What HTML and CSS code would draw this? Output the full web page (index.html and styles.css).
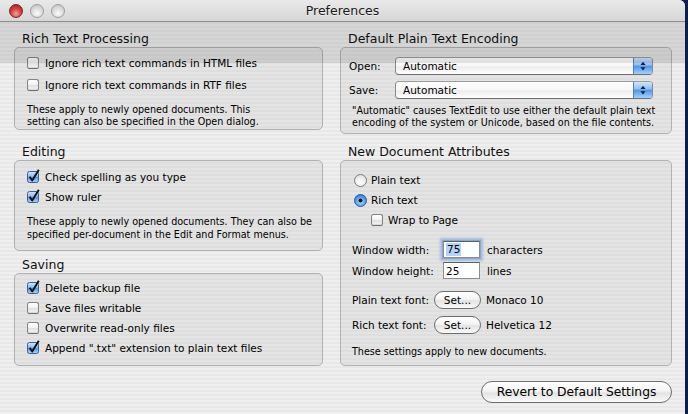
FILE: index.html
```html
<!DOCTYPE html>
<html>
<head>
<meta charset="utf-8">
<title>Preferences</title>
<link rel="stylesheet" href="styles.css">
</head>
<body>
<svg class="defs" width="0" height="0" aria-hidden="true">
  <defs>
    <linearGradient id="aqua" x1="0" y1="0" x2="0" y2="1">
      <stop offset="0" stop-color="#d4e8fb"/>
      <stop offset="0.45" stop-color="#8dbdf0"/>
      <stop offset="0.5" stop-color="#4d93e6"/>
      <stop offset="1" stop-color="#a9dafd"/>
    </linearGradient>
    <radialGradient id="aquaR" cx="0.5" cy="0.6" r="0.6">
      <stop offset="0" stop-color="#b9e3ff"/>
      <stop offset="0.6" stop-color="#5fa3ec"/>
      <stop offset="1" stop-color="#2f6fc4"/>
    </radialGradient>
  </defs>
</svg>
<div class="window">
  <div class="titlebar">
    <div class="lights">
      <span class="light red"></span>
      <span class="light"></span>
      <span class="light"></span>
    </div>
    <div class="title">Preferences</div>
    <div></div>
  </div>
  <div class="content">
    <div class="cols">
      <div class="col left">
        <div class="gh">Rich Text Processing</div>
        <div class="gbox box-rtp">
          <div class="row"><span class="cb"></span><span>Ignore rich text commands in HTML files</span></div>
          <div class="row r2"><span class="cb"></span><span>Ignore rich text commands in RTF files</span></div>
          <div class="note n1">These apply to newly opened documents. This<br>setting can also be specified in the Open dialog.</div>
        </div>

        <div class="gh gh-edit">Editing</div>
        <div class="gbox box-edit">
          <div class="row"><svg class="cbon" viewBox="0 0 12 12" width="12" height="12"><rect x="0.5" y="0.5" width="11" height="11" rx="2" fill="url(#aqua)" stroke="#3d5f93"/><path d="M2.6 5.8 L5.2 9.4 L11.8 -1.2" fill="none" stroke="#0d0d0d" stroke-width="1.9" stroke-linejoin="round"/></svg><span>Check spelling as you type</span></div>
          <div class="row"><svg class="cbon" viewBox="0 0 12 12" width="12" height="12"><rect x="0.5" y="0.5" width="11" height="11" rx="2" fill="url(#aqua)" stroke="#3d5f93"/><path d="M2.6 5.8 L5.2 9.4 L11.8 -1.2" fill="none" stroke="#0d0d0d" stroke-width="1.9" stroke-linejoin="round"/></svg><span>Show ruler</span></div>
          <div class="note n2">These apply to newly opened documents. They can also be<br>specified per-document in the Edit and Format menus.</div>
        </div>

        <div class="gh gh-save">Saving</div>
        <div class="gbox box-save">
          <div class="row"><svg class="cbon" viewBox="0 0 12 12" width="12" height="12"><rect x="0.5" y="0.5" width="11" height="11" rx="2" fill="url(#aqua)" stroke="#3d5f93"/><path d="M2.6 5.8 L5.2 9.4 L11.8 -1.2" fill="none" stroke="#0d0d0d" stroke-width="1.9" stroke-linejoin="round"/></svg><span>Delete backup file</span></div>
          <div class="row"><span class="cb"></span><span>Save files writable</span></div>
          <div class="row"><span class="cb"></span><span>Overwrite read-only files</span></div>
          <div class="row"><svg class="cbon" viewBox="0 0 12 12" width="12" height="12"><rect x="0.5" y="0.5" width="11" height="11" rx="2" fill="url(#aqua)" stroke="#3d5f93"/><path d="M2.6 5.8 L5.2 9.4 L11.8 -1.2" fill="none" stroke="#0d0d0d" stroke-width="1.9" stroke-linejoin="round"/></svg><span>Append ".txt" extension to plain text files</span></div>
        </div>
      </div>

      <div class="col right">
        <div class="gh">Default Plain Text Encoding</div>
        <div class="gbox box-enc">
          <div class="prow"><span class="plabel">Open:</span><div class="popup"><span class="ptext">Automatic</span><span class="pcap"><svg viewBox="0 0 18 16" width="18" height="16"><path d="M6.5 7 L9 3.8 L11.5 7 Z" fill="#0f1e45"/><path d="M6.5 9.2 L9 12.4 L11.5 9.2 Z" fill="#0f1e45"/></svg></span></div></div>
          <div class="prow p2"><span class="plabel">Save:</span><div class="popup"><span class="ptext">Automatic</span><span class="pcap"><svg viewBox="0 0 18 16" width="18" height="16"><path d="M6.5 7 L9 3.8 L11.5 7 Z" fill="#0f1e45"/><path d="M6.5 9.2 L9 12.4 L11.5 9.2 Z" fill="#0f1e45"/></svg></span></div></div>
          <div class="note n3">"Automatic" causes TextEdit to use either the default plain text<br>encoding of the system or Unicode, based on the file contents.</div>
        </div>

        <div class="gh gh-nda">New Document Attributes</div>
        <div class="gbox box-nda">
          <div class="row rr"><span class="radio"></span><span>Plain text</span></div>
          <div class="row rr"><svg class="radioon" viewBox="0 0 13 13" width="13" height="13"><circle cx="6.5" cy="6.5" r="6" fill="url(#aquaR)" stroke="#34609c"/><circle cx="6.5" cy="6.5" r="2" fill="#121a33"/></svg><span>Rich text</span></div>
          <div class="row rw"><span class="cb"></span><span>Wrap to Page</span></div>
          <div class="frow f1"><span class="flabel">Window width:</span><span class="field focus"><span class="sel">75</span></span><span>characters</span></div>
          <div class="frow f2"><span class="flabel">Window height:</span><span class="field">25</span><span>lines</span></div>
          <div class="brow b1"><span class="blabel">Plain text font:</span><span class="btn">Set...</span><span>Monaco 10</span></div>
          <div class="brow b2"><span class="blabel">Rich text font:</span><span class="btn">Set...</span><span>Helvetica 12</span></div>
          <div class="note n4">These settings apply to new documents.</div>
        </div>
      </div>
    </div>
    <div class="footer"><span class="btn big">Revert to Default Settings</span></div>
  </div>
  <div class="band"></div>
</div>
</body>
</html>
```
FILE: styles.css
```css
html, body {
  margin: 0;
  padding: 0;
}
body {
  width: 688px;
  height: 414px;
  overflow: hidden;
  background: #0f1d4c;
  font-family: "DejaVu Sans", "Liberation Sans", sans-serif;
  color: #000;
}
.defs {
  position: absolute;
  width: 0;
  height: 0;
}
.window {
  position: relative;
  width: 685px;
  height: 414px;
  border-top-right-radius: 6px;
  overflow: hidden;
  background: repeating-linear-gradient(180deg, #efefef 0px, #efefef 2px, #e8e8e8 2px, #e8e8e8 4px);
}
.titlebar {
  height: 21px;
  border-bottom: 1px solid #8d8d8d;
  background: linear-gradient(180deg, #e9e9e9 0%, #d6d6d6 100%);
  display: grid;
  grid-template-columns: 1fr auto 1fr;
  align-items: center;
}
.lights {
  display: flex;
  gap: 7px;
  padding-left: 9px;
}
.light {
  width: 12px;
  height: 12px;
  border-radius: 50%;
  border: 1px solid #9c9c9c;
  background: radial-gradient(circle at 50% 70%, #fbfbfb 0%, #dcdcdc 50%, #bdbdbd 100%);
}
.light.red {
  border-color: #7e2424;
  background: radial-gradient(circle at 50% 72%, #f4a3a3 0%, #d64545 45%, #9a1717 100%);
}
.title {
  font-size: 12.5px;
  color: #1a1a1a;
  text-shadow: 0 1px 0 rgba(255,255,255,0.5);
}
.content {
  padding: 10px 13px 0 14px;
}
.cols {
  display: flex;
  gap: 17px;
}
.col.left { width: 310px; }
.col.right { width: 332px; }
.gh {
  font-size: 12.5px;
  line-height: 14px;
  height: 14px;
  margin-bottom: 1px;
  padding-left: 8px;
  color: #111;
}
.gh-edit { margin-top: 15px; }
.gh-save { margin-top: 7px; }
.gh-nda { margin-top: 11px; }
.gbox {
  border: 1px solid #b1b1b1;
  border-radius: 5px;
  background: rgba(0,0,0,0.045);
  font-size: 10.5px;
}
.row {
  display: flex;
  align-items: center;
  height: 20px;
  gap: 6px;
  white-space: nowrap;
}
.note {
  font-size: 9.6px;
  line-height: 13px;
  white-space: nowrap;
}
.box-rtp { padding: 5px 0 1px 12px; }
.box-rtp .r2 { margin-top: 2px; }
.n1 { margin-top: 9px; line-height: 12px; }
.box-edit { padding: 6px 0 9px 12px; }
.n2 { margin-top: 8px; }
.box-save { padding: 4px 0 7px 12px; }
.cb {
  width: 12px;
  height: 12px;
  box-sizing: border-box;
  border: 1px solid #858585;
  border-bottom-color: #6d6d6d;
  border-radius: 2.5px;
  background: linear-gradient(180deg, #ffffff 0%, #f1f1f1 50%, #e1e1e1 55%, #f7f7f7 100%);
  box-shadow: inset 0 -1px 1px rgba(0,0,0,0.12);
  flex: none;
}
.cbon {
  flex: none;
  overflow: visible;
}
/* encoding */
.box-enc { padding: 9px 18px 4px 8px; }
.prow {
  display: flex;
  align-items: center;
  height: 18px;
}
.prow.p2 { margin-top: 6px; }
.plabel { width: 46px; flex: none; }
.popup {
  flex: 1;
  height: 18px;
  box-sizing: border-box;
  border: 1px solid #8a8a8a;
  border-top-color: #9a9a9a;
  border-bottom-color: #6f6f6f;
  border-radius: 4px;
  background: linear-gradient(180deg, #ffffff 0%, #f7f7f7 50%, #ececec 55%, #ffffff 100%);
  display: flex;
  align-items: center;
  overflow: hidden;
}
.ptext { flex: 1; padding-left: 7px; }
.pcap {
  width: 18px;
  height: 16px;
  border-left: 1px solid #5a7fb5;
  background: linear-gradient(180deg, #cfe5fb 0%, #8ebef0 45%, #4d93e6 50%, #9fd3fd 100%);
  display: flex;
}
.n3 { margin-top: 6px; padding-left: 3px; line-height: 12px; }
/* new document */
.box-nda { padding: 9px 0 7px 11px; }
.rr { padding-left: 2px; gap: 4px; }
.rw { padding-left: 19px; gap: 5px; }
.radio {
  width: 13px;
  height: 13px;
  box-sizing: border-box;
  border-radius: 50%;
  border: 1px solid #7c7c7c;
  background: radial-gradient(circle at 50% 70%, #ffffff 0%, #f2f2f2 45%, #d2d2d2 100%);
  flex: none;
}
.radioon { flex: none; }
.frow {
  display: flex;
  align-items: center;
  height: 19px;
  white-space: nowrap;
}
.f1 { margin-top: 10px; }
.f2 { margin-top: 2px; }
.flabel { width: 91px; flex: none; }
.field {
  width: 37px;
  height: 17px;
  box-sizing: border-box;
  border: 1px solid #8c8c8c;
  border-top-color: #5e5e5e;
  background: #fff;
  padding-left: 2px;
  margin-right: 7px;
  display: flex;
  align-items: center;
  flex: none;
}
.field.focus {
  box-shadow: 0 0 0 1px #86a9d8, 0 0 2px 3px rgba(115,160,220,0.55);
}
.sel {
  background: #b3d3f9;
  padding: 0 1px;
  line-height: 13px;
}
.brow {
  display: flex;
  align-items: center;
  height: 20px;
  white-space: nowrap;
}
.b1 { margin-top: 10px; }
.b2 { margin-top: 5px; }
.blabel { width: 82px; flex: none; }
.btn {
  display: inline-flex;
  align-items: center;
  justify-content: center;
  width: 47px;
  height: 18px;
  box-sizing: border-box;
  border: 1px solid #6e6e6e;
  border-radius: 9px;
  background: linear-gradient(180deg, #ffffff 0%, #f4f4f4 45%, #e3e3e3 55%, #fafafa 100%);
  margin-right: 5px;
  flex: none;
}
.n4 { margin-top: 10px; }
.footer {
  display: flex;
  justify-content: flex-end;
  margin-top: 15px;
}
.btn.big {
  width: 191px;
  height: 22px;
  border-radius: 11px;
  font-size: 12.3px;
  margin-right: 0;
}
.band {
  position: absolute;
  left: 0;
  right: 0;
  top: 22px;
  height: 41px;
  background: rgba(0,0,0,0.1);
  pointer-events: none;
}
```
